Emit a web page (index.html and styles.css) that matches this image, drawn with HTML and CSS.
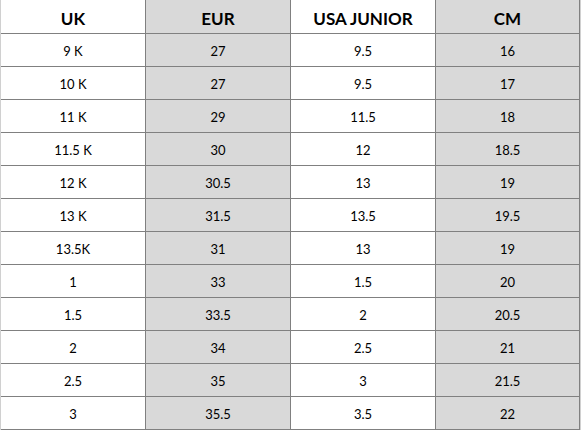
FILE: index.html
```html
<!DOCTYPE html>
<html>
<head>
<meta charset="utf-8">
<link rel="stylesheet" href="styles.css">
</head>
<body>
<div class="sheet">
  <div class="grid">
    <div class="cell head">UK</div>
    <div class="cell head alt">EUR</div>
    <div class="cell head">USA JUNIOR</div>
    <div class="cell head alt">CM</div>

    <div class="cell">9 K</div><div class="cell alt">27</div><div class="cell">9.5</div><div class="cell alt">16</div>
    <div class="cell">10 K</div><div class="cell alt">27</div><div class="cell">9.5</div><div class="cell alt">17</div>
    <div class="cell">11 K</div><div class="cell alt">29</div><div class="cell">11.5</div><div class="cell alt">18</div>
    <div class="cell">11.5 K</div><div class="cell alt">30</div><div class="cell">12</div><div class="cell alt">18.5</div>
    <div class="cell">12 K</div><div class="cell alt">30.5</div><div class="cell">13</div><div class="cell alt">19</div>
    <div class="cell">13 K</div><div class="cell alt">31.5</div><div class="cell">13.5</div><div class="cell alt">19.5</div>
    <div class="cell">13.5K</div><div class="cell alt">31</div><div class="cell">13</div><div class="cell alt">19</div>
    <div class="cell">1</div><div class="cell alt">33</div><div class="cell">1.5</div><div class="cell alt">20</div>
    <div class="cell">1.5</div><div class="cell alt">33.5</div><div class="cell">2</div><div class="cell alt">20.5</div>
    <div class="cell">2</div><div class="cell alt">34</div><div class="cell">2.5</div><div class="cell alt">21</div>
    <div class="cell">2.5</div><div class="cell alt">35</div><div class="cell">3</div><div class="cell alt">21.5</div>
    <div class="cell">3</div><div class="cell alt">35.5</div><div class="cell">3.5</div><div class="cell alt">22</div>
  </div>
</div>
</body>
</html>
```
FILE: styles.css
```css
html, body {
  margin: 0;
  padding: 0;
  background: #ffffff;
}
.sheet {
  width: 579px;
  border-left: 1px solid #d0d0d0;
  border-right: 1px solid #d0d0d0;
  font-family: "Lato", "Liberation Sans", sans-serif;
  color: #000;
}
.grid {
  display: grid;
  grid-template-columns: 145px 145px 145px 144px;
  grid-template-rows: 34px repeat(12, 33px);
}
.cell {
  box-sizing: border-box;
  border-right: 1px solid #808080;
  border-bottom: 1px solid #808080;
  display: flex;
  align-items: center;
  justify-content: center;
  font-size: 13px;
  padding-top: 1px;
  background: #ffffff;
}
.cell.alt {
  background: #d9d9d9;
}
.cell.head {
  font-weight: bold;
  font-size: 17px;
  padding-top: 3px;
}
```
